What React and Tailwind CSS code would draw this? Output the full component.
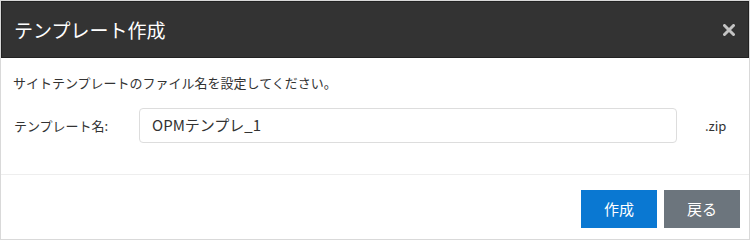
export default function App() {
  return (
    <div
      className="w-[750px] h-[240px] bg-white border border-[#d9d9d9] flex flex-col text-[#333]"
      style={{ fontFamily: '"Noto Sans CJK JP", "Noto Sans", sans-serif' }}
    >
      <div className="h-[57px] shrink-0 bg-[#333333] border border-[#222] flex items-center justify-between pl-3 pr-[13px]">
        <h1 className="text-[19px] text-white font-normal leading-none">テンプレート作成</h1>
        <svg width="12" height="12" viewBox="0 0 12 12" className="mt-[1px]">
          <path d="M1.5 1.5 L10.5 10.5 M10.5 1.5 L1.5 10.5" stroke="#c4c4c4" strokeWidth="3" strokeLinecap="round" />
        </svg>
      </div>

      <div className="h-[117px] shrink-0 border-b border-[#eeeeee] px-3 pt-[16px]">
        <p className="text-[13px] leading-[18px]">サイトテンプレートのファイル名を設定してください。</p>
        <div className="flex items-center mt-[16px]">
          <label className="w-[126px] text-[13px] pl-[1px]">テンプレート名:</label>
          <div className="w-[538px] h-[35px] border border-[#dddddd] rounded-[4px] flex items-center px-3 text-[15px]">
            OPMテンプレ_1
          </div>
          <span className="ml-[28px] text-[13px]">.zip</span>
        </div>
      </div>

      <div className="flex justify-end gap-[7px] pt-[15px] pr-[9px]">
        <button className="w-[76px] h-[38px] bg-[#0a78d2] text-white text-[15px]">作成</button>
        <button className="w-[76px] h-[38px] bg-[#6c757d] text-white text-[15px]">戻る</button>
      </div>
    </div>
  );
}
